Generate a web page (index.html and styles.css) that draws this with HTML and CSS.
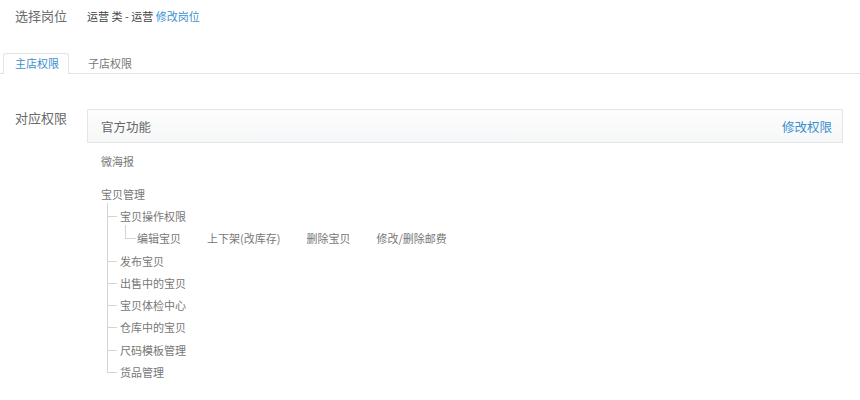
FILE: index.html
```html
<!DOCTYPE html>
<html lang="zh">
<head>
<meta charset="utf-8">
<link rel="stylesheet" href="styles.css">
</head>
<body>
<div class="row-job">
  <span class="label">选择岗位</span>
  <span class="job">运营 类 - 运营 <a class="link">修改岗位</a></span>
</div>

<div class="tabs">
  <div class="tab active">主店权限</div>
  <div class="tab">子店权限</div>
</div>

<div class="perm">
  <div class="label perm-label">对应权限</div>
  <div class="perm-body">
    <div class="panel">
      <span class="panel-title">官方功能</span>
      <a class="link panel-link">修改权限</a>
    </div>
    <div class="item single">微海报</div>
    <div class="item group">宝贝管理</div>
    <ul class="tree">
      <li>宝贝操作权限
        <ul class="sub">
          <li>编辑宝贝</li>
          <li>上下架(改库存)</li>
          <li>删除宝贝</li>
          <li>修改/删除邮费</li>
        </ul>
      </li>
      <li>发布宝贝</li>
      <li>出售中的宝贝</li>
      <li>宝贝体检中心</li>
      <li>仓库中的宝贝</li>
      <li>尺码模板管理</li>
      <li>货品管理</li>
    </ul>
  </div>
</div>
</body>
</html>
```

FILE: styles.css
```css
html, body {
  margin: 0;
  padding: 0;
  background: #fff;
}
body {
  font-family: "Noto Sans CJK SC", "Liberation Sans", sans-serif;
  color: #666;
  width: 860px;
  height: 400px;
  overflow: hidden;
}
.link {
  color: #3b8fd0;
  text-decoration: none;
}
.label {
  font-size: 13px;
  color: #6a6a6a;
  width: 72px;
  flex: none;
}
.row-job {
  display: flex;
  align-items: center;
  padding: 6px 0 0 15px;
  height: 20px;
  line-height: 20px;
}
.job {
  font-size: 11px;
  color: #444;
}
.tabs {
  display: flex;
  margin-top: 27px;
  padding-left: 3px;
  border-bottom: 1px solid #e3e3e3;
  height: 20px;
}
.tab {
  font-size: 11px;
  line-height: 19px;
  height: 20px;
  padding: 0 9px 0 11px;
  margin-right: 7px;
  color: #777;
  border: 1px solid transparent;
  border-bottom: none;
  box-sizing: border-box;
}
.tab.active {
  color: #3b8fd0;
  border-color: #e3e3e3;
  background: #fff;
  border-radius: 3px 3px 0 0;
  height: 21px;
}
.perm {
  display: flex;
  align-items: flex-start;
  padding-left: 15px;
  margin-top: 35px;
}
.perm-label {
  line-height: 20px;
  margin-top: -1px;
}
.perm-body {
  width: 756px;
}
.panel {
  display: flex;
  justify-content: space-between;
  align-items: center;
  height: 34px;
  box-sizing: border-box;
  border: 1px solid #e6e6e6;
  background: linear-gradient(#fdfdfd, #f6f7f8);
  padding: 0 10px 0 13px;
  font-size: 12.5px;
}
.panel-title {
  color: #666;
}
.item {
  font-size: 11px;
  line-height: 22px;
  padding-left: 14px;
  color: #777;
}
.single {
  margin-top: 7px;
}
.group {
  margin-top: 11px;
}
.tree {
  list-style: none;
  margin: 0;
  padding: 0 0 0 33px;
  font-size: 11px;
  color: #777;
}
.tree > li {
  position: relative;
  line-height: 22.3px;
}
.tree > li::before {
  content: "";
  position: absolute;
  left: -13px;
  top: 11px;
  width: 10px;
  border-top: 1px solid #d4d4d4;
}
.tree > li::after {
  content: "";
  position: absolute;
  left: -13px;
  top: -2px;
  bottom: 0;
  border-left: 1px solid #d4d4d4;
}
.tree > li:last-child::after {
  bottom: auto;
  height: 13px;
}
.sub {
  list-style: none;
  display: flex;
  margin: 0;
  padding: 0 0 0 17px;
  position: relative;
}
.sub li {
  margin-right: 26px;
}
.sub::before {
  content: "";
  position: absolute;
  left: 5px;
  top: -2px;
  width: 10px;
  height: 13px;
  border-left: 1px solid #d4d4d4;
  border-bottom: 1px solid #d4d4d4;
}
```
